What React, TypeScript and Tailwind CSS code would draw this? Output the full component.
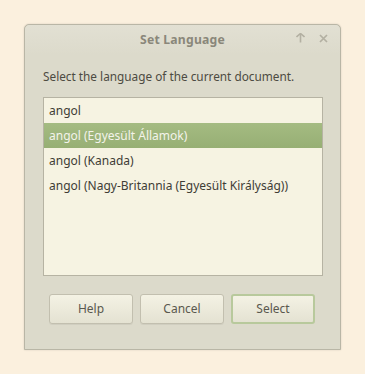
import React from "react";

const rows = [
  "angol",
  "angol (Egyesült Államok)",
  "angol (Kanada)",
  "angol (Nagy-Britannia (Egyesült Királyság))",
];

export default function App() {
  return (
    <div
      className="w-[365px] h-[374px] bg-[#fbf0de] pt-[24px] pl-[24px]"
      style={{ fontFamily: '"Noto Sans", sans-serif' }}
    >
      <div className="w-[317px] h-[326px] rounded-t-[5px] border border-[#b9b6a6] bg-[#dcdacb] flex flex-col shadow-[0_0_2px_rgba(0,0,0,0.15)]">
        <div className="relative h-[30px] flex items-center justify-center rounded-t-[5px] bg-gradient-to-b from-[#e2e0d3] to-[#dcdacb]">
          <span className="text-[12.2px] font-bold text-[#8a877a] tracking-[0.2px]">Set Language</span>
          <div className="absolute right-[12px] top-[8px] flex items-center gap-[14px] text-[#b3b0a2]">
            <svg width="9" height="10" viewBox="0 0 9 10">
              <path d="M0.5 4 L4.5 0.5 L8.5 4" fill="none" stroke="currentColor" strokeWidth="1.6" />
              <path d="M4.5 1 V9.5" stroke="currentColor" strokeWidth="1.6" />
            </svg>
            <svg width="9" height="9" viewBox="0 0 9 9">
              <path d="M1 1 L8 8 M8 1 L1 8" stroke="currentColor" strokeWidth="1.7" />
            </svg>
          </div>
        </div>
        <div className="px-[18px] pt-[13px]">
          <div className="text-[11.8px] leading-[16px] text-[#4d4b42] h-[16px]">
            Select the language of the current document.
          </div>
          <div className="mt-[13px] w-[280px] h-[179px] border border-[#b6b3a3] bg-[#f6f3e2]">
            {rows.map((r, i) => (
              <div
                key={r}
                className={
                  i === 1
                    ? "h-[25px] flex items-center pl-[5px] text-[12px] text-[#f3f3ea] bg-gradient-to-b from-[#a4bb82] to-[#97af74]"
                    : "h-[25px] flex items-center pl-[5px] text-[12px] text-[#3f3d36]"
                }
              >
                {r}
              </div>
            ))}
          </div>
          <div className="mt-[18px] pl-[6px] flex gap-[7px]">
            {["Help", "Cancel", "Select"].map((b) => (
              <div
                key={b}
                className={
                  b === "Select"
                    ? "w-[84px] h-[30px] rounded-[3px] border-2 border-[#b8c99c] bg-gradient-to-b from-[#f4f2e4] to-[#e4e2d2] flex items-center justify-center text-[12px] text-[#5a584e]"
                    : "w-[84px] h-[30px] rounded-[3px] border border-[#c2bfaf] bg-gradient-to-b from-[#f4f2e4] to-[#e4e2d2] flex items-center justify-center text-[12px] text-[#5a584e] shadow-[0_1px_0_rgba(0,0,0,0.05)]"
                }
              >
                {b}
              </div>
            ))}
          </div>
        </div>
      </div>
    </div>
  );
}
